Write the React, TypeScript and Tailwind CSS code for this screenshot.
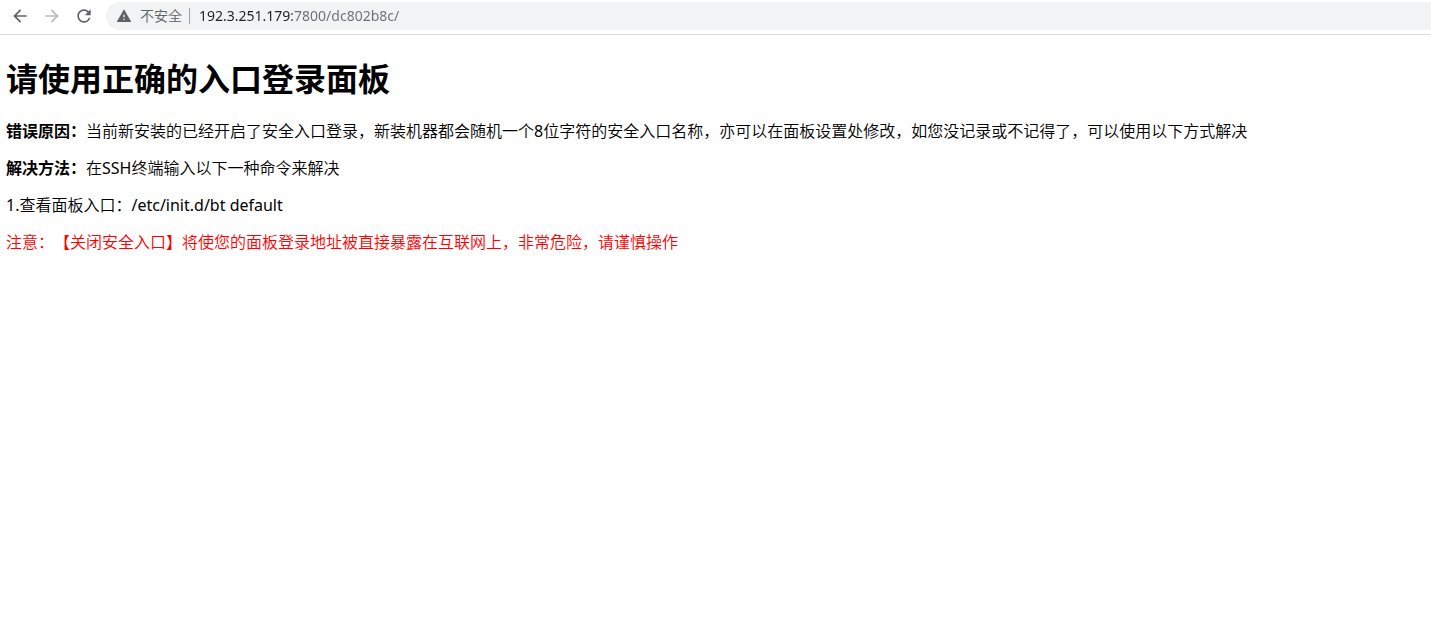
import { useState } from "react";
import { MdArrowBack, MdArrowForward, MdRefresh, MdWarning } from "react-icons/md";

const PANEL_URL = "192.3.251.179:7800/dc802b8c/";

function Toolbar() {
  const [url, setUrl] = useState(PANEL_URL);

  return (
    <header className="flex h-[35px] items-start border-b border-[#dadada] bg-white pt-0.5">
      <nav className="flex h-7 items-center gap-3 pl-2.5 pr-3">
        <button type="button" aria-label="后退" className="text-[#5f6368]">
          <MdArrowBack className="size-5" />
        </button>
        <button type="button" aria-label="前进" disabled className="text-[#babcbe]">
          <MdArrowForward className="size-5" />
        </button>
        <button type="button" aria-label="重新加载" className="text-[#5f6368]">
          <MdRefresh className="size-5" />
        </button>
      </nav>

      <div className="flex h-7 min-w-0 flex-1 items-center rounded-l-full bg-[#f1f3f4] pl-2.5 text-sm">
        <button type="button" className="flex items-center gap-2 text-[#5f6368]">
          <MdWarning className="size-4" />
          <span className="font-[350]">不安全</span>
        </button>
        <span className="ml-[7px] h-4 w-px bg-[#9aa0a6]" />
        {/* host is dark, port and path are grey */}
        <input
          aria-label="地址栏"
          value={url}
          onChange={(e) => setUrl(e.target.value)}
          spellCheck={false}
          className="ml-[9px] min-w-0 flex-1 bg-[linear-gradient(to_right,#202124_93px,#6b6f73_93px)] bg-clip-text text-transparent caret-[#202124] outline-none"
        />
      </div>
    </header>
  );
}

export default function App() {
  return (
    <div className="min-h-screen bg-white font-['Noto_Sans','Noto_Sans_CJK_SC',sans-serif] text-black [text-spacing-trim:space-all]">
      <Toolbar />
      <main className="flex flex-col gap-4 px-1.5 pt-[22px] text-base font-[350] leading-[21px]">
        <h1 className="mb-1 text-[32px] font-bold leading-[44px]">请使用正确的入口登录面板</h1>
        <p>
          <b className="font-bold">错误原因：</b>
          当前新安装的已经开启了安全入口登录，新装机器都会随机一个<span className="font-normal">8</span>位字符的安全入口名称，亦可以在面板设置处修改，如您没记录或不记得了，可以使用以下方式解决
        </p>
        <p>
          <b className="font-bold">解决方法：</b>在<span className="font-normal">SSH</span>终端输入以下一种命令来解决
        </p>
        <p>
          <span className="font-normal">1.</span>查看面板入口：
          <span className="font-normal">/etc/init.d/bt default</span>
        </p>
        <p className="text-[#ff0000]">
          注意：【关闭安全入口】将使您的面板登录地址被直接暴露在互联网上，非常危险，请谨慎操作
        </p>
      </main>
    </div>
  );
}
